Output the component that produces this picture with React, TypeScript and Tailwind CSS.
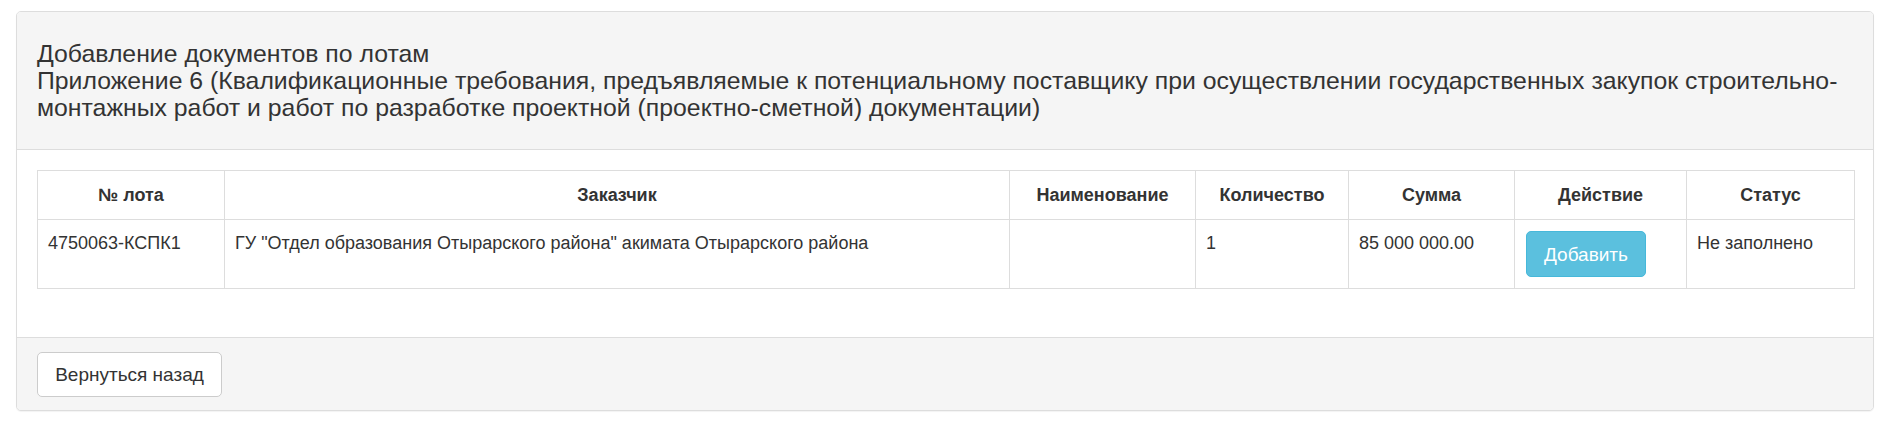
import React from "react";

export default function App() {
  const font = { fontFamily: '"Liberation Sans", Arial, sans-serif' };
  return (
    <div className="min-h-[423px] bg-white pt-[11px] pl-[16px]" style={font}>
      <div className="w-[1858px] rounded-[5px] border border-[#dddddd] bg-white text-[#333333] shadow-[0_1px_1px_rgba(0,0,0,0.05)]">
        <div className="rounded-t-[4px] border-b border-[#dddddd] bg-[#f5f5f5] px-[20px] py-[28px] text-[24.8px] leading-[27px]">
          <div className="whitespace-nowrap">Добавление документов по лотам</div>
          <div className="whitespace-nowrap">
            Приложение 6 (Квалификационные требования, предъявляемые к потенциальному поставщику при осуществлении государственных закупок строительно-
          </div>
          <div className="whitespace-nowrap">
            монтажных работ и работ по разработке проектной (проектно-сметной) документации)
          </div>
        </div>
        <div className="pt-[20px] pb-[48px] pl-[20px] pr-[19px]">
          <table className="w-[1817px] table-fixed border-collapse border border-[#dddddd] text-[18px] leading-[25px]">
            <colgroup>
              <col className="w-[187px]" />
              <col className="w-[785px]" />
              <col className="w-[186px]" />
              <col className="w-[153px]" />
              <col className="w-[166px]" />
              <col className="w-[172px]" />
              <col className="w-[168px]" />
            </colgroup>
            <thead>
              <tr>
                {["№ лота", "Заказчик", "Наименование", "Количество", "Сумма", "Действие", "Статус"].map((h) => (
                  <th
                    key={h}
                    className="border border-[#dddddd] px-[10px] py-[11px] text-center align-middle text-[18px] font-bold leading-[26px]"
                  >
                    {h}
                  </th>
                ))}
              </tr>
            </thead>
            <tbody>
              <tr>
                <td className="border border-[#dddddd] px-[10px] py-[11px] align-top">4750063-КСПК1</td>
                <td className="border border-[#dddddd] px-[10px] py-[11px] align-top">
                  ГУ "Отдел образования Отырарского района" акимата Отырарского района
                </td>
                <td className="border border-[#dddddd] px-[10px] py-[11px] align-top"></td>
                <td className="border border-[#dddddd] px-[10px] py-[11px] align-top">1</td>
                <td className="border border-[#dddddd] px-[10px] py-[11px] align-top">85 000 000.00</td>
                <td className="border border-[#dddddd] px-[11px] py-[11px] align-top">
                  <button className="flex h-[46px] w-[120px] items-center justify-center rounded-[5px] border border-[#46b8da] bg-[#5bc0de] text-[19px] leading-[25px] text-white">
                    Добавить
                  </button>
                </td>
                <td className="border border-[#dddddd] px-[10px] py-[11px] align-top">Не заполнено</td>
              </tr>
            </tbody>
          </table>
        </div>
        <div className="rounded-b-[4px] border-t border-[#dddddd] bg-[#f5f5f5] pl-[20px] pt-[14px] pb-[13px]">
          <button className="flex h-[45px] w-[185px] items-center justify-center rounded-[5px] border border-[#cccccc] bg-white text-[19px] leading-[25px] text-[#333333]">
            Вернуться назад
          </button>
        </div>
      </div>
    </div>
  );
}
